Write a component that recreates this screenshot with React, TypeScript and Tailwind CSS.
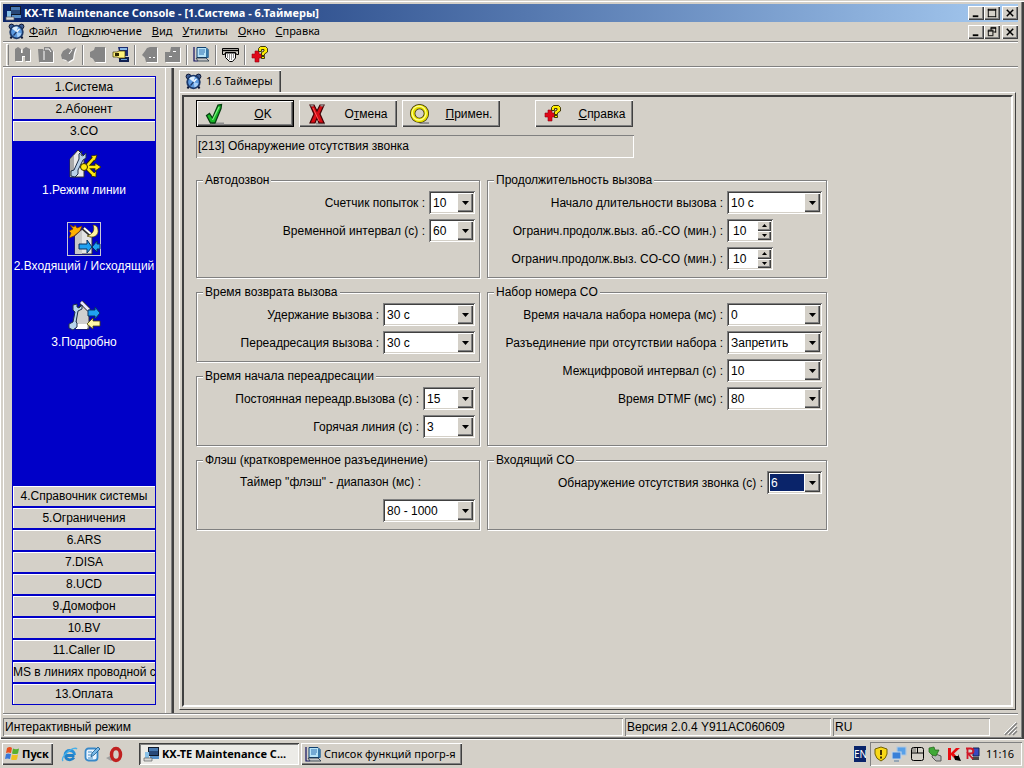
import { useState, type ReactNode } from 'react';
import { clsx } from 'clsx';

const raised = 'shadow-[inset_1px_1px_0_#fff,inset_-1px_-1px_0_#404040,inset_-2px_-2px_0_#808080]';
const sunken = 'shadow-[inset_1px_1px_0_#808080,inset_-1px_-1px_0_#fff,inset_2px_2px_0_#404040,inset_-2px_-2px_0_#d4d0c8]';
const thinSunken = 'shadow-[inset_1px_1px_0_#808080,inset_-1px_-1px_0_#fff]';
const uiFont = "font-['Noto_Sans',sans-serif]";

/* ---------- icons ---------- */

function ClockIcon() {
  return (
    <svg width="17" height="17" viewBox="0 0 17 17" className="shrink-0">
      <circle cx="3.5" cy="3.5" r="2.4" fill="#3c5c94" stroke="#0c1430" />
      <circle cx="13.5" cy="3.5" r="2.4" fill="#3c5c94" stroke="#0c1430" />
      <path d="M4 13l-1.500 2.500M13 13l1.500 2.500" stroke="#0c1430" strokeWidth="2" />
      <circle cx="8.5" cy="9" r="6.3" fill="#5c9ae0" stroke="#1c3868" strokeWidth="1.800" />
      <path d="M8.500 9L4 5.500A5.500 5.500 0 0 1 10 3.800z" fill="#dff0ff" />
      <path d="M8.500 9l5 1.500a5.500 5.500 0 0 1-4 4z" fill="#a8d0f8" />
      <path d="M8.500 9l3-3" stroke="#fff" strokeWidth="1.200" />
      <path d="M8.500 9l-3 3.500" stroke="#1c3868" strokeWidth="1.200" />
    </svg>
  );
}

function AppIcon() {
  return (
    <svg width="17" height="16" viewBox="0 0 17 16" className="shrink-0">
      <path d="M5 1h11v9H5z" fill="#101828" />
      <path d="M6 2h9v3H6z" fill="#4878b0" />
      <path d="M6 5h9v4H6z" fill="#284878" />
      <path d="M2 6h4v6H2z" fill="#88c0e8" />
      <path d="M7 10h9v3H7z" fill="#5890c8" />
      <path d="M1 12h8v3H1z" fill="#d8d8d8" stroke="#606060" strokeWidth="0.700" />
    </svg>
  );
}

function HelpCrossIcon() {
  return (
    <svg width="18" height="17" viewBox="0 0 18 17" className="shrink-0">
      <path d="M4 5h4v3h3v4H8v4H4v-4H1V8h3z" fill="#e00818" stroke="#900010" strokeWidth="0.600" />
      <path d="M7.500 5.500v-3l2-2h5l2 2v3.500l-3 2v1.500h-3V6.500l2.500-1.500V3.500h-2.500v2z" fill="#ffee00" stroke="#302800" strokeWidth="0.900" />
      <path d="M10.500 10.500h3v2h-3z" fill="#ffee00" stroke="#302800" strokeWidth="0.900" />
    </svg>
  );
}

function MonitorIcon() {
  return (
    <svg width="17" height="17" viewBox="0 0 17 17" className="shrink-0">
      <path d="M1 1v14h4" fill="none" stroke="#101060" strokeWidth="1.200" />
      <path d="M4 1.500h9l2 2v8H4z" fill="#b8e4f8" stroke="#104070" />
      <path d="M6 4h6M6 6h6M6 8h5" stroke="#3070b0" />
      <path d="M13 2l2.500 2v8L13 11z" fill="#3878a8" />
      <path d="M3 12h10l3 3H5z" fill="#c8c8c8" stroke="#203040" strokeWidth="0.800" />
    </svg>
  );
}

function PrintIcon() {
  return (
    <svg width="17" height="16" viewBox="0 0 17 16">
      <path d="M0.500 1.500h16v6h-2l-1-2h-10l-1 2h-2z" fill="#d4d0c8" stroke="#000" />
      <path d="M1 3.500h15" stroke="#000" strokeWidth="1.500" />
      <path d="M3.500 6h10v5l-3 3.500h-3l-4-4z" fill="#fff" stroke="#000" />
      <path d="M5.500 7v4M7.500 7v6M9.500 7v6M11.500 7v4" stroke="#777" strokeWidth="0.800" />
    </svg>
  );
}

function ExitIcon() {
  return (
    <svg width="18" height="17" viewBox="0 0 18 17">
      <path d="M6 1h10v9H8z" fill="#1c2c70" />
      <path d="M8 2h7v2H8z" fill="#8ab8e8" />
      <path d="M7 11h10v5H7z" fill="#102050" />
      <path d="M9 13h6v1H9z" fill="#68a0d8" />
      <path d="M1 6h4l2-1h6v7H7l-2-1H1z" fill="#fff27a" stroke="#403800" strokeWidth="0.700" />
      <path d="M3 7h4v3H3z" fill="#302800" />
    </svg>
  );
}

function DisabledIcon({ d, marks }: { d: string; marks?: string }) {
  return (
    <svg width="18" height="17" viewBox="0 0 18 17">
      <path d={d} fill="#fff" transform="translate(1 1)" />
      <path d={d} fill="#858585" />
      {marks && <path d={marks} stroke="#fff" fill="none" />}
    </svg>
  );
}

function CheckIcon() {
  return (
    <svg width="20" height="22" viewBox="0 0 20 22">
      <path d="M7 20.500h12" stroke="#909090" strokeWidth="2" />
      <path d="M1.500 12.500l3-2 3 4.500L13 2l3.500-.500-.5 4-6 14.500H5.500z" fill="#18b828" stroke="#064010" strokeWidth="1.300" />
      <path d="M7.500 17L14 4" stroke="#7cf080" strokeWidth="1.300" />
    </svg>
  );
}

function CrossIcon() {
  return (
    <svg width="20" height="22" viewBox="0 0 20 22">
      <path d="M9 20.500h9" stroke="#909090" strokeWidth="2" />
      <path d="M3 2h4l3 6 3-6h4l-4 9 4 9h-5l-2-5-2 5H3l4-9z" fill="#d80c14" stroke="#400004" strokeWidth="1.200" />
      <path d="M3.500 2.500h3M13.500 2.500h3" stroke="#888" strokeWidth="2" />
      <path d="M6 5l6 13" stroke="#ff5858" />
    </svg>
  );
}

function RingIcon() {
  return (
    <svg width="21" height="22" viewBox="0 0 21 22">
      <path d="M10 20.500h10" stroke="#909090" strokeWidth="2" />
      <circle cx="10" cy="10.500" r="7.200" fill="none" stroke="#383000" strokeWidth="5.600" />
      <circle cx="10" cy="10.500" r="7.200" fill="none" stroke="#e8e000" strokeWidth="4" />
      <circle cx="9.500" cy="10" r="7.300" fill="none" stroke="#ffff90" strokeWidth="1.400" />
    </svg>
  );
}

function LineModeIcon() {
  return (
    <svg width="34" height="34" viewBox="0 0 34 34">
      <path d="M3 13L11 4l6 6v21H3z" fill="#e8e8e8" stroke="#303030" />
      <path d="M3 31V13l4-4v22z" fill="#a8a8a8" />
      <path d="M15 5l-3 3v5L7 24l-3 1v5l4 1 3-3v-4l5-10 3-2V7l-3 3-2-1z" fill="#b8d0e8" stroke="#203048" />
      <path d="M19 21l8-9M19 21h12M19 21l8 8" stroke="#302800" strokeWidth="4.500" />
      <path d="M24 10l6-1-2 6zM28 17l6 4-6 4zM24 30l5 1 0-6z" fill="#ffe810" stroke="#302800" strokeWidth="0.800" />
      <path d="M19 21l8-9M19 21h12M19 21l8 8" stroke="#ffe810" strokeWidth="2.600" />
      <circle cx="17" cy="21" r="3.500" fill="#ffe810" stroke="#302800" />
    </svg>
  );
}

function InOutIcon() {
  return (
    <svg width="34" height="34" viewBox="0 0 34 34">
      <rect x="0.500" y="0.500" width="33" height="33" fill="none" stroke="#c8c8d8" />
      <path d="M8 14l9-8 8 8v18H8z" fill="#e4e4e4" stroke="#303030" />
      <path d="M8 14l7-6v24H8z" fill="#c8c8c8" />
      <path d="M8 3l2 3 5-2-2 5-6 5-5 2 2-5-2-2 4-2-3-4 4 2z" fill="#ffb000" stroke="#703000" strokeWidth="0.700" />
      <path d="M16 6l9 8" stroke="#303030" strokeWidth="4" />
      <path d="M17 6l8 7" stroke="#fff" strokeWidth="2" />
      <path d="M26 3c2 5 0 9-6 11 7 3 12-1 11-6 0-3-2-5-5-5z" fill="#fff3a0" stroke="#504000" strokeWidth="0.700" />
      <path d="M12 22h8v-4l5 7-5 6v-4h-8z" fill="#20a0f0" stroke="#083060" />
      <path d="M33 22h-3v-3l-5 6 5 5v-3h3z" fill="#20a0f0" stroke="#083060" />
    </svg>
  );
}

function DetailIcon() {
  return (
    <svg width="34" height="34" viewBox="0 0 34 34">
      <path d="M9 12l7-7 6 8v18H9z" fill="#d0d0d0" stroke="#303030" />
      <path d="M9 26h11v5H9z" fill="#fff" />
      <path d="M14 4l8 8" stroke="#303030" strokeWidth="4.500" />
      <path d="M14 4l8 8" stroke="#e8e8ff" strokeWidth="2.600" />
      <path d="M6 7l0 5 2 2-2 10-4 2v4l4 2 4-3v-4l-1-1 2-11 4-2V7l-3 3-2-1V6z" fill="#b8d4ec" stroke="#203048" />
      <path d="M21 12h7V9l5 6-5 6v-3h-7z" fill="#20a0f0" stroke="#083060" />
      <path d="M33 23h-7v-3l-6 6 6 5v-3h7z" fill="#fff8a8" stroke="#504800" strokeWidth="0.800" />
    </svg>
  );
}

function FlagIcon() {
  return (
    <svg width="17" height="16" viewBox="0 0 17 16">
      <path d="M3 2q3-2 5 0L7 7q-3-1-5 0z" fill="#e85020" />
      <path d="M9 2.500q3 1.500 6 0l-1 5q-3 1-6 0z" fill="#58b030" />
      <path d="M2 8q2-1 5 0l-1 5q-3-1-5 0z" fill="#3878d8" />
      <path d="M8 8.500q3 1 6 0l-1 5q-3 1-6 0z" fill="#f0c020" />
    </svg>
  );
}

function IeIcon() {
  return (
    <svg width="17" height="17" viewBox="0 0 17 17">
      <path d="M13.500 9.500H4.500c0 5 6 5.500 8.500 2" fill="none" stroke="#2080c8" strokeWidth="2.800" />
      <path d="M4 9C4 3 13.500 3 13.500 9" fill="none" stroke="#2890d8" strokeWidth="2.800" />
      <path d="M2 15C-1 11 13-1 16 3" fill="none" stroke="#48b0e8" strokeWidth="1.400" />
    </svg>
  );
}

function NotesIcon() {
  return (
    <svg width="16" height="17" viewBox="0 0 16 17">
      <rect x="1.500" y="2.500" width="12" height="12" rx="3" fill="#e8f4ff" stroke="#3888c8" strokeWidth="1.800" />
      <path d="M4 6h4M4 9h3M4 12h5" stroke="#4890c8" />
      <path d="M7 11l1-4 6-6 2 2-6 6z" fill="#78b8e8" stroke="#185888" strokeWidth="0.800" />
    </svg>
  );
}

function OperaIcon() {
  return (
    <svg width="17" height="17" viewBox="0 0 17 17">
      <path d="M0 12l6-3 3 4-4 2z" fill="#a0a0a0" />
      <ellipse cx="10" cy="8.500" rx="4.500" ry="6" fill="none" stroke="#c02020" strokeWidth="3.500" />
    </svg>
  );
}

function TrayIcons() {
  return (
    <div className="flex items-center gap-[2px]">
      <svg width="16" height="16" viewBox="0 0 16 16">
        <path d="M8 1l6 2v5q-1 5-6 7-5-2-6-7V3z" fill="#f8d818" stroke="#706000" />
        <path d="M8 4v5M8 10.500v2" stroke="#302000" strokeWidth="1.800" />
      </svg>
      <svg width="17" height="16" viewBox="0 0 17 16">
        <path d="M6 1h9v8H6z" fill="#58a0e8" stroke="#b0c8e0" strokeWidth="1.200" />
        <path d="M1 6h9v7H1z" fill="#3880d8" stroke="#c0d4e8" strokeWidth="1.200" />
        <path d="M3 15h5" stroke="#8098b0" strokeWidth="1.500" />
      </svg>
      <svg width="15" height="16" viewBox="0 0 15 16">
        <rect x="1.500" y="1.500" width="12" height="13" rx="2" fill="#d4d0c8" stroke="#000" />
        <path d="M2 7h11M7.500 1.500V7" stroke="#000" />
        <path d="M2.500 3h4M2.500 5h4" stroke="#000" strokeDasharray="1 1" />
      </svg>
      <svg width="17" height="16" viewBox="0 0 17 16">
        <path d="M6 7l8 3v5H9l-4-4z" fill="#b8b8b8" stroke="#585858" />
        <path d="M2 2l5-1 1 3h4l-3 6-4-1-3-3z" fill="#40a838" stroke="#206018" strokeWidth="0.700" />
      </svg>
      <svg width="16" height="16" viewBox="0 0 16 16">
        <path d="M2 2h3v5l5-5h4L8 7.500l5 5.500H9L5 9v5H2z" fill="#e80c10" />
        <path d="M8 10h4V8l3 7-6-1z" fill="#000" />
      </svg>
      <svg width="16" height="16" viewBox="0 0 16 16">
        <path d="M9 2h6v8H9z" fill="#3848c0" stroke="#102050" />
        <path d="M8 11h7v3H8z" fill="#484848" />
        <path d="M2 2.500h4.500q3 0 3 2.500T6.500 7.500H4L9 13M3.500 2v11" fill="none" stroke="#d01828" strokeWidth="1.800" />
      </svg>
    </div>
  );
}

/* ---------- window chrome ---------- */

type Glyph = 'min' | 'max' | 'restore' | 'close';

const glyphs: Record<Glyph, ReactNode> = {
  min: <path d="M3 9h6v2H3z" fill="#000" />,
  max: <path d="M2 2.500h9M2.500 2v9M10.500 2v9M2 10.500h9M2 3.500h9" stroke="#000" />,
  restore: <path d="M5 1.500h6M5 2.500h6M5.500 2v3M10.500 2v5M8 6.500h3M2 5.500h6M2 4.500h6M2.500 5v5M7.500 5v5M2 10.500h6" stroke="#000" />,
  close: <path d="M3 3l7 7M10 3l-7 7" stroke="#000" strokeWidth="1.600" />,
};

function WindowButtons({ kinds }: { kinds: Glyph[] }) {
  return (
    <div className="ml-auto flex">
      {kinds.map((k) => (
        <button
          key={k}
          aria-label={k}
          className={clsx('flex h-[14px] w-4 items-center justify-center bg-[#d4d0c8]', raised, k === 'close' && 'ml-[2px]')}
        >
          <svg width="12" height="12" viewBox="0 0 13 13">{glyphs[k]}</svg>
        </button>
      ))}
    </div>
  );
}

const menu = [
  ['', 'Ф', 'айл'],
  ['По', 'д', 'ключение'],
  ['', 'В', 'ид'],
  ['', 'У', 'тилиты'],
  ['', 'О', 'кно'],
  ['', 'С', 'правка'],
];

function Separator() {
  return <span className="mx-[2px] h-5 w-[2px] border-r border-white bg-[#808080]" />;
}

function ToolButton({ label, disabled, children }: { label: string; disabled?: boolean; children: ReactNode }) {
  return (
    <button aria-label={label} disabled={disabled} className="flex h-5 w-[23px] items-center justify-center">
      {children}
    </button>
  );
}

function Toolbar() {
  return (
    <div className="flex h-[25px] items-center border-t border-b border-t-white border-b-[#808080] pl-[3px]">
      <span className="mr-[2px] h-[22px] w-[3px] border border-white border-r-[#808080]" />
      <ToolButton label="new" disabled>
        <DisabledIcon d="M1 3l3-2 3 2v4h2V3l3-2 4 2v12h-5v-5H8v5H1z" />
      </ToolButton>
      <ToolButton label="open" disabled>
        <DisabledIcon d="M1 3h5l1 2V1h6l3 4v11H2z" marks="M7 5v9M8 3h4l2 3" />
      </ToolButton>
      <ToolButton label="wizard" disabled>
        <DisabledIcon d="M3 5l5-3 3 2 5-3-2 6-1 6-5 3-2-2-4-1-1-4z" marks="M12 4l-3 4" />
      </ToolButton>
      <Separator />
      <ToolButton label="connect" disabled>
        <DisabledIcon d="M6 1h10v15H6l-2-3-3-2V6l4-2z" />
      </ToolButton>
      <ToolButton label="disconnect">
        <ExitIcon />
      </ToolButton>
      <Separator />
      <ToolButton label="upload" disabled>
        <DisabledIcon d="M6 2l3-1h7v15H5l-1-4-3-3 3-4z" marks="M8 11.500h2M12 11.500h2" />
      </ToolButton>
      <ToolButton label="download" disabled>
        <DisabledIcon d="M7 1h9v15H1V6h5z" marks="M9 5.500h3M5 10.500h3" />
      </ToolButton>
      <Separator />
      <ToolButton label="monitor">
        <MonitorIcon />
      </ToolButton>
      <Separator />
      <ToolButton label="print">
        <PrintIcon />
      </ToolButton>
      <Separator />
      <ToolButton label="help">
        <HelpCrossIcon />
      </ToolButton>
    </div>
  );
}

/* ---------- sidebar ---------- */

const sections = [
  '1.Система',
  '2.Абонент',
  '3.CO',
  '4.Справочник системы',
  '5.Ограничения',
  '6.ARS',
  '7.DISA',
  '8.UCD',
  '9.Домофон',
  '10.BV',
  '11.Caller ID',
  'MS в линиях проводной с',
  '13.Оплата',
];

const coItems = [
  { label: '1.Режим линии', icon: <LineModeIcon /> },
  { label: '2.Входящий / Исходящий', icon: <InOutIcon /> },
  { label: '3.Подробно', icon: <DetailIcon /> },
];

function Sidebar() {
  const [open, setOpen] = useState(2);

  return (
    <nav className="flex w-[162px] shrink-0 flex-col border-r border-white px-2 py-2">
      <div className="flex w-36 flex-1 flex-col bg-[#0000c8] p-px">
        {sections.map((name, i) => (
          <div key={name} className={clsx('flex flex-col', i === open ? 'flex-1' : 'pb-[2px] last:pb-0')}>
            <button
              onClick={() => setOpen(i)}
              className="h-5 w-full overflow-hidden bg-[#d4d0c8] text-center leading-5 whitespace-nowrap shadow-[inset_1px_1px_0_#fff]"
            >
              {name}
            </button>
            {i === open && (
              <div className="flex flex-1 flex-col items-center gap-6 pt-[5px]">
                {coItems.map((item) => (
                  <button key={item.label} className="flex flex-col items-center gap-[2px] leading-4 whitespace-nowrap text-white">
                    {item.icon}
                    {item.label}
                  </button>
                ))}
              </div>
            )}
          </div>
        ))}
      </div>
    </nav>
  );
}

/* ---------- form ---------- */

function Group({ title, className, children }: { title: string; className?: string; children: ReactNode }) {
  return (
    <fieldset
      className={clsx(
        'min-w-0 border border-[#808080] pr-1 pb-[7px] shadow-[1px_1px_0_#fff,inset_1px_1px_0_#fff]',
        className,
      )}
    >
      <legend className="ml-[6px] bg-[#d4d0c8] px-[2px] leading-[14px]">{title}</legend>
      <div className="flex flex-col gap-[5px] pt-1">{children}</div>
    </fieldset>
  );
}

interface SelectProps {
  id: string;
  label: string;
  value: string;
  width: string;
  active?: boolean;
}

function SelectBox({ id, value, width, active, label }: SelectProps) {
  return (
    <span className={clsx('relative flex h-[23px] bg-white p-[2px]', sunken, width)}>
      <select
        id={id}
        aria-label={label}
        defaultValue={value}
        className={clsx(
          'w-full appearance-none border border-white pl-[1px] outline-none',
          active && 'bg-[#0a246a] text-white outline-1 -outline-offset-2 outline-dotted outline-[#f5db95]',
        )}
      >
        <option>{value}</option>
      </select>
      <span
        className={clsx(
          'pointer-events-none absolute top-[2px] right-[2px] bottom-[2px] flex w-4 items-center justify-center bg-[#d4d0c8]',
          raised,
        )}
      >
        <svg width="7" height="4" viewBox="0 0 7 4">
          <path d="M0 0h7L3.500 4z" />
        </svg>
      </span>
    </span>
  );
}

function SelectRow(props: SelectProps) {
  return (
    <div className="flex items-center justify-end gap-1">
      <label htmlFor={props.id} className="whitespace-nowrap">{props.label} :</label>
      <SelectBox {...props} />
    </div>
  );
}

function SpinRow({ id, label, initial }: { id: string; label: string; initial: number }) {
  const [value, setValue] = useState(initial);

  return (
    <div className="flex items-center justify-end gap-1">
      <label htmlFor={id} className="whitespace-nowrap">{label} :</label>
      <span className="flex w-[95px]">
        <span className={clsx('flex h-[23px] w-[46px] bg-white p-[2px]', sunken)}>
          <input
            id={id}
            value={value}
            onChange={(e) => setValue(Number(e.target.value) || 0)}
            className="w-[28px] min-w-0 pl-1 outline-none"
          />
          <span className="flex w-[14px] flex-col bg-[#d4d0c8]">
            <button aria-label="+" onClick={() => setValue(value + 1)} className={clsx('flex flex-1 items-center justify-center', raised)}>
              <svg width="5" height="3" viewBox="0 0 5 3"><path d="M0 3h5L2.500 0z" /></svg>
            </button>
            <button aria-label="-" onClick={() => setValue(value - 1)} className={clsx('flex flex-1 items-center justify-center', raised)}>
              <svg width="5" height="3" viewBox="0 0 5 3"><path d="M0 0h5L2.500 3z" /></svg>
            </button>
          </span>
        </span>
      </span>
    </div>
  );
}

function ActionButton({ icon, primary, className, children }: { icon: ReactNode; primary?: boolean; className?: string; children: ReactNode }) {
  return (
    <button
      className={clsx(
        'flex h-[27px] w-[98px] items-center bg-[#d4d0c8] pl-2',
        primary && 'border border-black',
        raised,
        className,
      )}
    >
      <span className="flex w-5 justify-center">{icon}</span>
      <span className="flex-1 pl-2 text-center">{children}</span>
    </button>
  );
}

function TimersForm() {
  return (
    <div className="flex flex-1 flex-col items-start pt-[3px] pl-3">
      <div className="flex gap-[5px]">
        <ActionButton icon={<CheckIcon />} primary><u>O</u>K</ActionButton>
        <ActionButton icon={<CrossIcon />}>О<u>т</u>мена</ActionButton>
        <ActionButton icon={<RingIcon />}><u>П</u>римен.</ActionButton>
        <ActionButton icon={<HelpCrossIcon />} className="ml-[30px]"><u>С</u>правка</ActionButton>
      </div>
      <p className={clsx('mt-2 h-[23px] w-[438px] pl-[2px] leading-[23px]', thinSunken)}>
        [213] Обнаружение отсутствия звонка
      </p>

      <div className="mt-[15px] grid grid-cols-[284px_340px] gap-[7px]">
        <Group title="Автодозвон">
          <SelectRow id="retries" label="Счетчик попыток" value="10" width="w-[46px]" />
          <SelectRow id="retry-interval" label="Временной интервал (с)" value="60" width="w-[46px]" />
        </Group>
        <Group title="Продолжительность вызова">
          <SelectRow id="call-start" label="Начало длительности вызова" value="10 с" width="w-[95px]" />
          <SpinRow id="limit-ext" label="Огранич.продолж.выз. аб.-CO (мин.)" initial={10} />
          <SpinRow id="limit-co" label="Огранич.продолж.выз. CO-CO (мин.)" initial={10} />
        </Group>
        <Group title="Время возврата вызова">
          <SelectRow id="hold" label="Удержание вызова" value="30 с" width="w-[92px]" />
          <SelectRow id="transfer" label="Переадресация вызова" value="30 с" width="w-[92px]" />
        </Group>
        <Group title="Набор номера CO" className="row-span-2">
          <SelectRow id="dial-start" label="Время начала набора номера (мс)" value="0" width="w-[95px]" />
          <SelectRow id="no-dial" label="Разъединение при отсутствии набора" value="Запретить" width="w-[95px]" />
          <SelectRow id="interdigit" label="Межцифровой интервал (с)" value="10" width="w-[95px]" />
          <SelectRow id="dtmf" label="Время DTMF (мс)" value="80" width="w-[95px]" />
        </Group>
        <Group title="Время начала переадресации">
          <SelectRow id="forward" label="Постоянная переадр.вызова (с)" value="15" width="w-[52px]" />
          <SelectRow id="hotline" label="Горячая линия (с)" value="3" width="w-[52px]" />
        </Group>
        <Group title="Флэш (кратковременное разъединение)">
          <label htmlFor="flash" className="pr-[54px] text-right leading-[23px]">Таймер "флэш" - диапазон (мс) :</label>
          <span className="flex justify-end">
            <SelectBox id="flash" label="Таймер" value="80 - 1000" width="w-[92px]" />
          </span>
        </Group>
        <Group title="Входящий CO">
          <SelectRow id="ring-off" label="Обнаружение отсутствия звонка (с)" value="6" width="w-[55px]" active />
        </Group>
      </div>
    </div>
  );
}

/* ---------- page ---------- */

function StatusBar() {
  return (
    <footer className="flex h-[26px] items-center gap-[2px] border-t border-[#808080] leading-[18px] shadow-[inset_0_1px_0_#fff]">
      <div className={clsx('h-[18px] flex-1 pl-[2px]', thinSunken)}>Интерактивный режим</div>
      <div className={clsx('h-[18px] w-[206px] pl-[2px]', thinSunken)}>Версия 2.0.4 Y911AC060609</div>
      <div className={clsx('h-[18px] w-[157px] pl-[2px]', thinSunken)}>RU</div>
      <svg width="26" height="18" viewBox="2 0 26 18">
        <path d="M15 17L27 5M19 17l8-8M23 17l4-4" stroke="#808080" strokeWidth="1.500" />
        <path d="M14 16L26 4M18 16l8-8M22 16l4-4" stroke="#fff" />
      </svg>
    </footer>
  );
}

function Taskbar() {
  return (
    <div className={clsx('flex h-[29px] items-center border-t border-white pr-[2px] pl-[2px] text-[11px]', uiFont)}>
      <button className={clsx('flex h-[22px] w-[51px] items-center gap-[1px] pl-[2px] font-bold', raised)}>
        <FlagIcon />
        Пуск
      </button>
      <div className="ml-2 flex items-center gap-[6px]">
        <button aria-label="Internet Explorer"><IeIcon /></button>
        <button aria-label="Outlook"><NotesIcon /></button>
        <button aria-label="Opera"><OperaIcon /></button>
      </div>
      <button className="ml-4 flex h-[22px] w-[160px] items-center gap-[2px] bg-[#ecebe7] pl-1 font-bold whitespace-nowrap shadow-[inset_1px_1px_0_#404040,inset_-1px_-1px_0_#fff,inset_2px_2px_0_#808080]">
        <AppIcon />
        KX-TE Maintenance C...
      </button>
      <button className={clsx('ml-[2px] flex h-[22px] w-[161px] items-center gap-[2px] pl-1 whitespace-nowrap', raised)}>
        <MonitorIcon />
        Список функций прогр-я
      </button>
      <div className="ml-auto flex items-center gap-1">
        <span className="h-4 w-3 overflow-hidden bg-[#0a246a] text-[10px] leading-4 text-white">EN</span>
        <div className={clsx('flex h-6 w-[152px] items-center justify-between pr-2 pl-[3px]', thinSunken)}>
          <TrayIcons />
          <span>11:16</span>
        </div>
      </div>
    </div>
  );
}

export default function App() {
  return (
    <div className="flex min-h-screen flex-col bg-[#d4d0c8] font-['Liberation_Sans',Arial,sans-serif] text-[12px] text-black">
      <div className="flex flex-1 flex-col pt-1 pr-[6px] pl-[3px] shadow-[inset_0_1px_0_#d4d0c8,inset_1px_2px_0_#fff,inset_-2px_-1px_0_#404040,inset_-3px_-2px_0_#808080]">
        <header className={clsx('text-[11px]', uiFont)}>
          <div className="flex h-[18px] items-center gap-[2px] bg-linear-to-r from-[#0a246a] to-[#a6caf0] pl-[2px] font-bold text-white">
            <AppIcon />
            <h1 className="whitespace-nowrap">KX-TE Maintenance Console - [1.Система - 6.Таймеры]</h1>
            <WindowButtons kinds={['min', 'max', 'close']} />
          </div>
          <div className="flex h-5 items-center border-b border-[#808080] pl-[5px]">
            <ClockIcon />
            <nav className="flex gap-[2px]">
              {menu.map(([before, key, after]) => (
                <button key={key} className="px-1">
                  {before}<u>{key}</u>{after}
                </button>
              ))}
            </nav>
            <WindowButtons kinds={['min', 'restore', 'close']} />
          </div>
          <Toolbar />
        </header>

        <div className="flex flex-1 border-t border-l border-white">
          <Sidebar />
          <div className="w-[6px] border-r border-[#808080]" />
          <main className="flex flex-1 flex-col border-l-2 border-[#404040] pt-[2px] pr-[2px] pb-[3px] pl-[5px]">
            <button className={clsx('flex h-[22px] w-[102px] items-center gap-1 pl-[6px] text-[11px] shadow-[inset_1px_1px_0_#fff,inset_-1px_0_0_#404040,inset_-2px_0_0_#808080]', uiFont)}>
              <ClockIcon />
              1.6 Таймеры
            </button>
            <div className="flex flex-1 flex-col border border-t-white border-r-[#404040] border-b-[#404040] border-l-white p-[2px]">
              <div className="flex flex-1 flex-col border-2 border-t-[#404040] border-r-white border-b-white border-l-[#404040]">
                <TimersForm />
              </div>
            </div>
          </main>
        </div>
        <StatusBar />
      </div>
      <Taskbar />
    </div>
  );
}
